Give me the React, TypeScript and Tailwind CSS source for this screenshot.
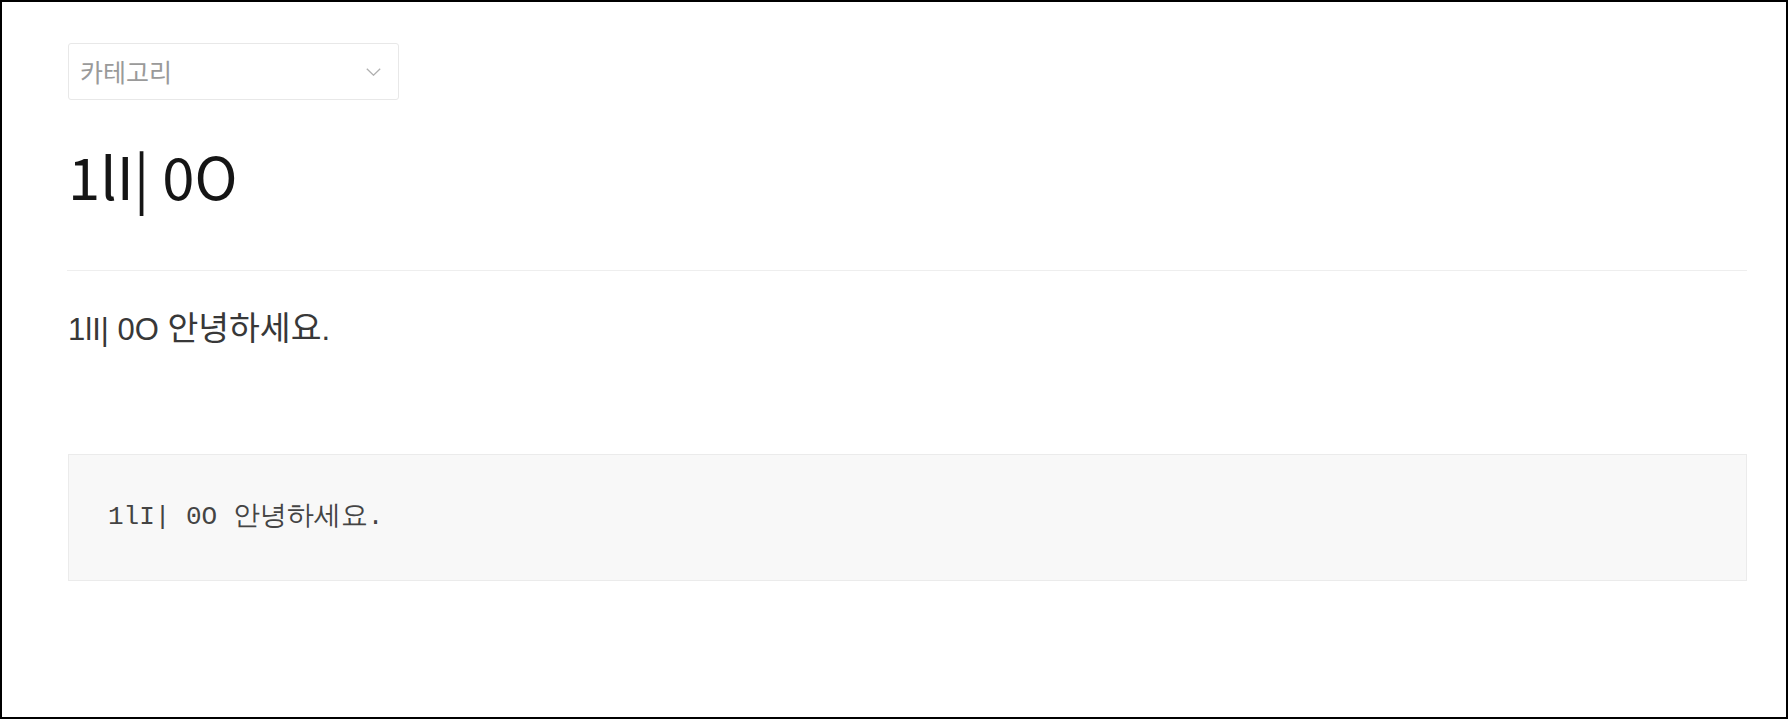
import React from 'react';

const CategorySelect: React.FC = () => (
  <div className="flex h-[57px] w-[331px] items-center justify-between rounded-[3px] border border-[#e8e8e8] bg-white pl-[11px] pr-[17px] font-['Noto_Sans_CJK_KR',sans-serif] text-[25px] text-[#9a9a9a]">
    <span className="leading-none">카테고리</span>
    <svg width="15" height="8" viewBox="0 0 15 8" fill="none">
      <polyline points="0.8,0.8 7.5,7.2 14.2,0.8" stroke="#b0b0b0" strokeWidth="1.3" />
    </svg>
  </div>
);

export default function App() {
  return (
    <div className="box-border h-[719px] w-full border-2 border-black bg-white pl-[66px] pr-[39px] pt-[41px]">
      <CategorySelect />

      <h1 className="mt-[39px] font-['Noto_Sans_CJK_KR',sans-serif] text-[58px] font-normal leading-[72px] text-[#151515]">
        1lI| 0O
      </h1>

      <hr className="mt-[59px] -ml-px border-0 border-t border-[#eeeeee]" />

      <p className="mt-[35px] font-['Liberation_Sans','Noto_Sans_CJK_KR',sans-serif] text-[31px] leading-[45px] text-[#383838]">
        1lI| 0O <span className="text-[33.5px]">안녕하세요</span>.
      </p>

      <pre className="mt-[102px] flex h-[127px] items-center border border-[#ebebeb] bg-[#f8f8f8] pl-[39px] font-['Liberation_Mono','Noto_Sans_CJK_KR',monospace] text-[26px] text-[#444444]">
        <code>
          1lI| 0O <span className="text-[27px]">안녕하세요</span>.
        </code>
      </pre>
    </div>
  );
}
